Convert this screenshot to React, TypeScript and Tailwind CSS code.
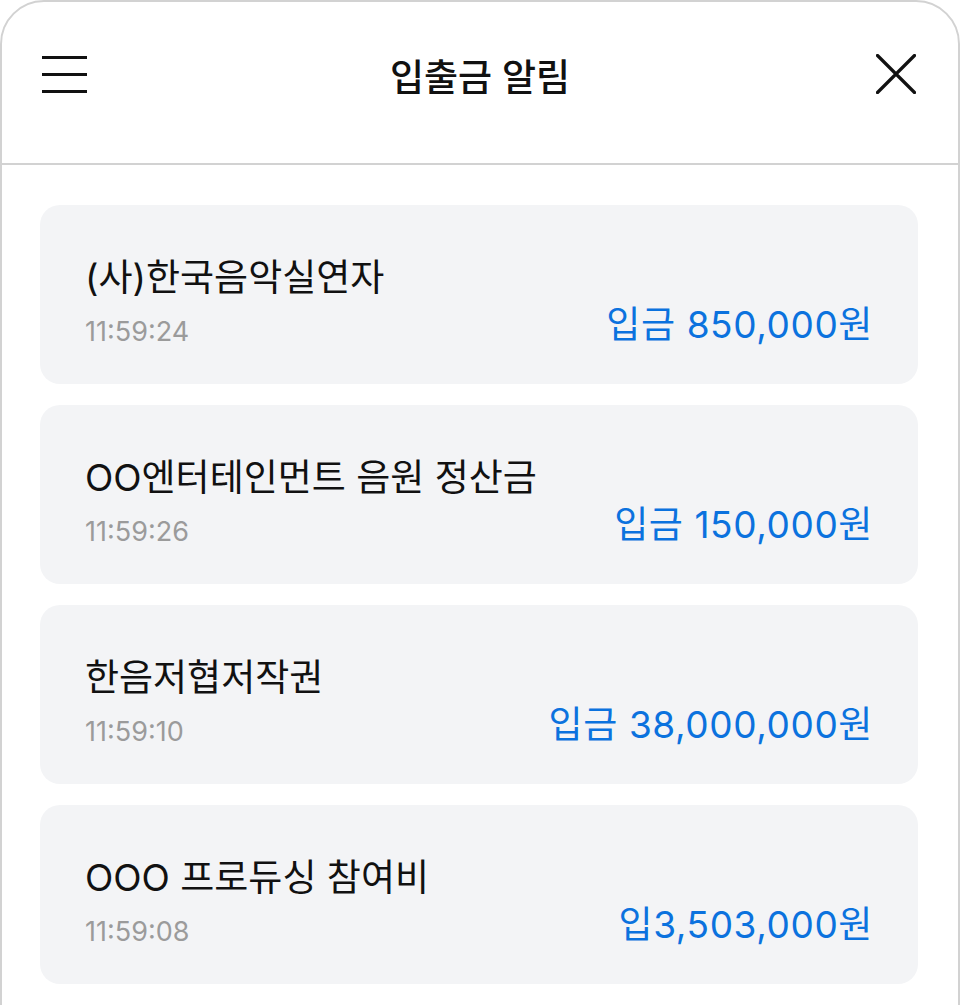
import React from 'react';

interface Alarm {
  title: string;
  time: string;
  amount: string;
}

const alarms: Alarm[] = [
  { title: '(사)한국음악실연자', time: '11:59:24', amount: '입금 850,000원' },
  { title: 'OO엔터테인먼트 음원 정산금', time: '11:59:26', amount: '입금 150,000원' },
  { title: '한음저협저작권', time: '11:59:10', amount: '입금 38,000,000원' },
  { title: 'OOO 프로듀싱 참여비', time: '11:59:08', amount: '입3,503,000원' },
];

const font = { fontFamily: 'Inter, "Noto Sans CJK KR", sans-serif' };

const MenuIcon = () => (
  <svg width="45" height="40" viewBox="0 0 45 40" fill="none">
    <path d="M0 3.5h45M0 20.5h45M0 37.5h45" stroke="#111" strokeWidth="3.2" />
  </svg>
);

const CloseIcon = () => (
  <svg width="40" height="40" viewBox="0 0 40 40" fill="none">
    <path d="M1.5 1.5l37 37M38.5 1.5l-37 37" stroke="#111" strokeWidth="3.2" strokeLinecap="round" />
  </svg>
);

const AlarmCard: React.FC<{ item: Alarm }> = ({ item }) => (
  <div className="flex items-end justify-between rounded-[20px] bg-[#f3f4f6] pl-[45px] pr-[45px] pt-[51px] pb-[36px]">
    <div className="flex flex-col">
      <span className="text-[37px] leading-[44px] text-[#111]">{item.title}</span>
      <span className="mt-[16px] text-[27px] leading-[32px] text-[#9b9b9b]">{item.time}</span>
    </div>
    <span className="mb-[1px] text-[37px] leading-[44px] text-[#0b72de] tracking-[0.6px]">{item.amount}</span>
  </div>
);

export default function App() {
  return (
    <div className="min-h-[1005px] w-[960px] bg-white" style={font}>
      <div className="min-h-[1010px] rounded-t-[44px] border-2 border-[#d2d2d2] bg-white">
        {/* Header */}
        <div className="relative flex h-[163px] items-center justify-between border-b-2 border-[#d2d2d2] pl-[40px] pr-[42px] pb-[18px]">
          <MenuIcon />
          <span className="absolute left-1/2 top-[52px] -translate-x-1/2 text-[37px] leading-[48px] font-medium text-[#111]">
            입출금 알림
          </span>
          <CloseIcon />
        </div>

        {/* List */}
        <div className="flex flex-col gap-[21px] pl-[38px] pr-[40px] pt-[40px]">
          {alarms.map((a) => (
            <AlarmCard key={a.time} item={a} />
          ))}
        </div>
      </div>
    </div>
  );
}
